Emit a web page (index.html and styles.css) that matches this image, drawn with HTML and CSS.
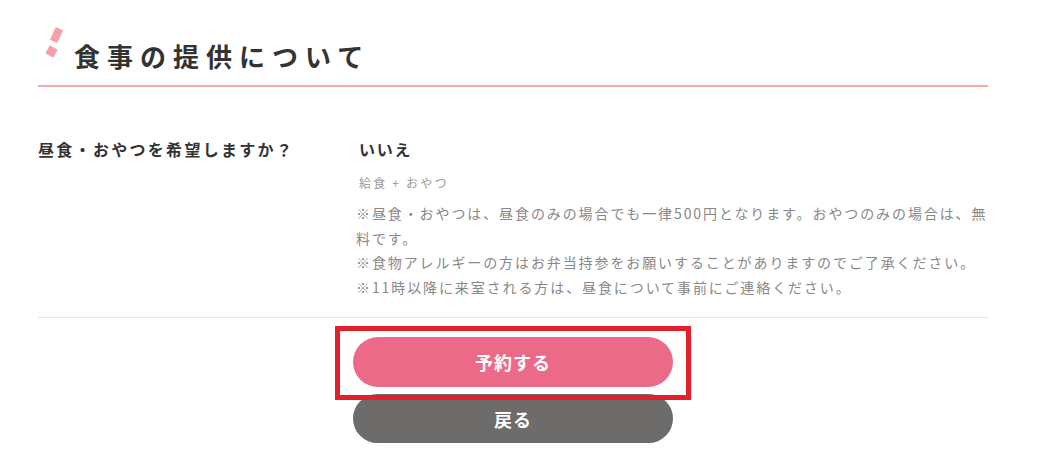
FILE: index.html
```html
<!DOCTYPE html>
<html lang="ja">
<head>
<meta charset="utf-8">
<link rel="stylesheet" href="styles.css">
</head>
<body>
<div class="page">
  <h2 class="heading">
    <svg class="deco" width="24" height="34" viewBox="0 0 24 34">
      <rect x="8.5" y="2" width="8" height="14" fill="#f5a0a8" transform="rotate(25 12.5 9)"/>
      <rect x="3" y="21" width="9" height="9" fill="#f5a0a8" transform="rotate(30 7.5 25.5)"/>
    </svg>
    <span class="heading-text">食事の提供について</span>
  </h2>
  <div class="row">
    <div class="label">昼食・おやつを希望しますか？</div>
    <div class="value">
      <div class="answer">いいえ</div>
      <div class="sub">給食 + おやつ</div>
      <p class="notes">※昼食・おやつは、昼食のみの場合でも一律500円となります。おやつのみの場合は、無料です。<br>※食物アレルギーの方はお弁当持参をお願いすることがありますのでご了承ください。<br>※11時以降に来室される方は、昼食について事前にご連絡ください。</p>
    </div>
  </div>
  <div class="actions">
    <div class="primary-wrap">
      <button class="btn btn-primary">予約する</button>
      <span class="highlight"></span>
    </div>
    <button class="btn btn-back">戻る</button>
  </div>
</div>
</body>
</html>
```

FILE: styles.css
```css
* { box-sizing: border-box; }
html, body { margin: 0; padding: 0; background: #fff; }
body {
  font-family: "Noto Sans CJK JP", "Noto Sans", sans-serif;
  color: #333;
}
.page {
  width: 950px;
  margin-left: 38px;
}
.heading {
  display: flex;
  align-items: flex-start;
  margin: 0;
  padding: 26px 0 10px 6px;
  border-bottom: 2px solid #f6a8ab;
}
.deco {
  display: block;
  flex: none;
  margin-right: 6px;
}
.heading-text {
  font-size: 26px;
  line-height: 39px;
  font-weight: 700;
  letter-spacing: 7px;
  color: #333;
  margin-top: 10px;
}
.row {
  display: flex;
  padding: 50px 0 18px;
  border-bottom: 1px solid #e6e6e6;
}
.label {
  width: 318px;
  flex: none;
  font-size: 16px;
  line-height: 24px;
  font-weight: 700;
  letter-spacing: 2.3px;
}
.value {
  flex: 1;
}
.answer {
  font-size: 16px;
  line-height: 24px;
  font-weight: 700;
  letter-spacing: 1.8px;
  padding-left: 3px;
}
.sub {
  margin-top: 12px;
  font-size: 12px;
  line-height: 20px;
  color: #999;
  letter-spacing: 2.2px;
  padding-left: 3px;
}
.notes {
  margin: 8px 0 0;
  font-size: 14px;
  line-height: 24.5px;
  color: #888;
  letter-spacing: 1.9px;
}
.actions {
  display: flex;
  flex-direction: column;
  align-items: center;
  gap: 7px;
  padding-top: 19px;
  width: 950px;
}
.primary-wrap {
  position: relative;
}
.btn {
  display: block;
  width: 320px;
  height: 50px;
  border: 0;
  border-radius: 25px;
  color: #fff;
  font-family: "Noto Sans CJK JP", "Noto Sans", sans-serif;
  font-size: 18px;
  font-weight: 700;
  letter-spacing: 1px;
  cursor: pointer;
}
.btn-primary { background: #eb6a88; }
.btn-back { background: #6e6b6b; height: 49px; }
.highlight {
  position: absolute;
  left: -18px;
  top: -11px;
  width: 356px;
  height: 74px;
  border: 5px solid #e1202b;
  pointer-events: none;
}
```
